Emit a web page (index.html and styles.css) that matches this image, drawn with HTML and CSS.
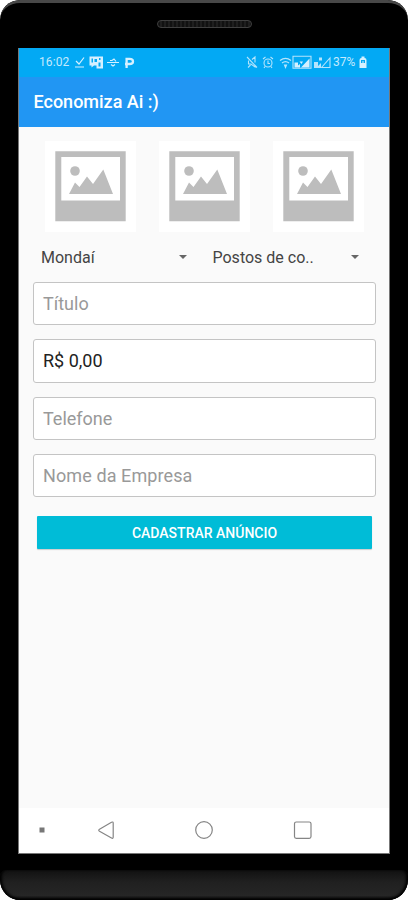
FILE: index.html
```html
<!DOCTYPE html>
<html lang="pt-BR">
<head>
<meta charset="utf-8">
<title>Economiza Ai :)</title>
<link rel="stylesheet" href="styles.css">
</head>
<body>
<svg width="0" height="0" class="defs" aria-hidden="true">
  <symbol id="photo" viewBox="0 0 91 91">
    <path fill="#bdbdbd" fill-rule="evenodd" d="M10.3 10.3H80.7V80.3H10.3ZM16.3 16V59.5H75V16Z"/>
    <circle cx="30" cy="30" r="4.8" fill="#bdbdbd"/>
    <path fill="#bdbdbd" d="M24 53 30 41.5 34.5 46 42 35.5 48 43 58.3 28.5 68 53Z"/>
  </symbol>
</svg>
<div class="phone">
  <div class="top"><div class="speaker"></div></div>
  <main class="screen">
    <header class="status">
      <div class="group">
        <span class="clock">16:02</span>
        <svg width="62" height="14" viewBox="0 0 62 14" fill="none" stroke="#d5f0ff" stroke-width="1.2">
          <path d="M3 6 6 9 11 2.500M2 12H11"/>
          <path fill="#d5f0ff" stroke="none" fill-rule="evenodd" d="M16.500 1.500H30V13.500H23.500V10.500H21L18.500 12.500V10.500H16.500ZM18.500 3.500V7.500H20V3.500ZM21.500 4V7H24V4ZM26 3V5H27.500V3ZM25.500 7.500V11.500H27.500V7.500Z"/>
          <path d="M34 7.500H46M37 5.500H39L41 4 43 6.500M38 9.500 40 11 42 9.500"/>
          <path stroke-width="2.300" d="M53.600 13V3.800H56.500Q60 3.800 60 6.400 60 9 56.500 9H52"/>
        </svg>
      </div>
      <div class="group">
        <svg width="86" height="14" viewBox="0 0 86 14" fill="none" stroke="#b5e4fc" stroke-width="1.100">
          <path d="M1 2 11 12.500M2.500 5.500V9H5L9 12V10M6 4.500 9 2V7.500M2 12.500 4.500 10"/>
          <circle cx="22" cy="8" r="4"/><path d="M22 5.500V8.500H24M17 4 19.500 2M27 4 24.500 2M19 11.500 18 13M25 11.500 26 13"/>
          <path stroke-width="1.300" d="M34 5.500Q39.500 1.300 45 5.500M36 8Q39.500 5.200 43 8"/><path fill="#b5e4fc" d="M38.500 10H40.500L39.500 12.500Z"/>
          <path d="M47 1.300H65V13.300H47Z"/><path fill="#d5f0ff" stroke="none" d="M48.500 7.500H52V10.500L54 9V12.500H48.500ZM55 12.500 63.500 3.500V12.500ZM53.500 6.500H57L55.500 9Z"/>
          <path fill="#b5e4fc" stroke="none" d="M68 7H72V13H68ZM73 2.500H76V5.500H73ZM72 11 75 8V13H72Z"/><path d="M75.500 12.500 84 3V12.500Z"/>
        </svg>
        <span class="percent">37%</span>
        <svg width="8" height="14" viewBox="0 0 8 14"><path fill="#d5f0ff" fill-rule="evenodd" d="M2.500 1.500H5.500V3Q7.500 3 7.500 5V13H.5V5Q.5 3 2.500 3ZM2 5V8H3.500V6H4.500V8H6V5Z"/></svg>
      </div>
    </header>
    <div class="appbar"><h1>Economiza Ai :)</h1></div>
    <form class="content">
      <div class="photos">
        <svg class="photo"><use href="#photo"/></svg>
        <svg class="photo"><use href="#photo"/></svg>
        <svg class="photo"><use href="#photo"/></svg>
      </div>
      <div class="selects">
        <div class="select"><span>Mondaí</span><i></i></div>
        <div class="select"><span>Postos de co..</span><i></i></div>
      </div>
      <div class="fields">
        <div class="field"><span>Título</span></div>
        <div class="field value"><span>R$ 0,00</span></div>
        <div class="field"><span>Telefone</span></div>
        <div class="field company"><span>Nome da Empresa</span></div>
      </div>
      <button type="button">CADASTRAR ANÚNCIO</button>
    </form>
    <nav>
      <svg width="371" height="45" viewBox="0 0 371 45" fill="none" stroke="#858585" stroke-width="1.200">
        <path fill="#777" stroke="none" d="M20.500 19.500H25.500V24.500H20.500Z"/>
        <path stroke-linejoin="round" d="M80.500 21.200 92.500 14.200Q94.200 13.500 94.200 15V29Q94.200 31 92.500 30L80.500 23.300Q79 22.200 80.500 21.200Z"/>
        <circle cx="185" cy="22" r="8.300"/>
        <rect x="275.500" y="14" width="16.500" height="16.300" rx="1.800"/>
      </svg>
    </nav>
  </main>
  <div class="bottom"></div>
</div>
</body>
</html>
```
FILE: styles.css
```css
* { box-sizing: border-box; }
body { margin: 0; background: #fff; font-family: Roboto, "Liberation Sans", sans-serif; }
.defs { display: none; }
.phone {
  width: 408px; height: 900px; overflow: hidden;
  display: flex; flex-direction: column;
  background: #000; border-radius: 20px;
}
.top {
  height: 48px; flex: none; padding-top: 17px;
  border-top: 3px solid #484848; border-radius: 20px 20px 0 0;
  display: flex; justify-content: center; align-items: flex-start;
}
.speaker {
  width: 95px; height: 8px; border: 1px solid #404040; border-radius: 4px;
  background: repeating-linear-gradient(90deg, #111 0 2px, #1e1e1e 2px 4px);
}
.screen {
  width: 372px; height: 806px; flex: none; margin-left: 18px;
  display: flex; flex-direction: column; background: #fafafa;
  border: solid #777; border-width: 0 1px 1px;
}
.status {
  height: 28.500px; flex: none; padding: 0 22px 0 20px;
  display: flex; justify-content: space-between; align-items: center;
  background: #03a9f4; color: #c5eafd; font-size: 12px;
}
.group { display: flex; align-items: center; height: 14px; }
.clock { width: 34px; letter-spacing: .1px; }
.percent { width: 27px; padding-left: 1px; }
.appbar { height: 50px; flex: none; padding-left: 14.500px; display: flex; align-items: center; background: #2196f3; }
h1 { margin: 0; color: #fff; font-size: 18px; line-height: 24px; font-weight: 500; white-space: nowrap; }
.content { flex: 1; display: flex; flex-direction: column; padding: 14.500px 13px 0 14px; }
.photos { display: flex; justify-content: center; gap: 23px; height: 91px; }
.photo { width: 91px; height: 91px; background: #fff; }
.selects { display: grid; grid-template-columns: 1fr 1fr; height: 50px; }
.select { display: flex; align-items: center; justify-content: space-between; padding: 0 17.500px 0 8px; font-size: 16px; color: #444; white-space: nowrap; }
.select i { border: 4.500px solid transparent; border-top-color: #666; border-bottom: 0; }
.fields { display: flex; flex-direction: column; gap: 14px; }
.field {
  height: 43.300px; padding-left: 9px; display: flex; align-items: center;
  border: 1px solid #c4c4c4; border-radius: 3px; background: #fff;
  color: #999; font-size: 18px; white-space: nowrap;
}
.value { color: #222; }
.company { letter-spacing: .1px; }
button {
  height: 33px; margin: 19px 4px 0; padding: 0; border: 0; border-radius: 1px;
  background: #00bcd7; color: #fff; font: 500 14px Roboto, sans-serif;
  box-shadow: 0 1px 1px #ccc;
}
nav { height: 45px; flex: none; background: #fff; overflow: hidden; }
nav svg { display: block; }
.bottom {
  flex: 1; margin-top: 16px; border-radius: 6px 6px 20px 20px;
  background: linear-gradient(#111, #202020 40%, #262626 85%, #111);
  box-shadow: inset 2px -1px 3px #000, inset -2px -1px 3px #000;
}
```
